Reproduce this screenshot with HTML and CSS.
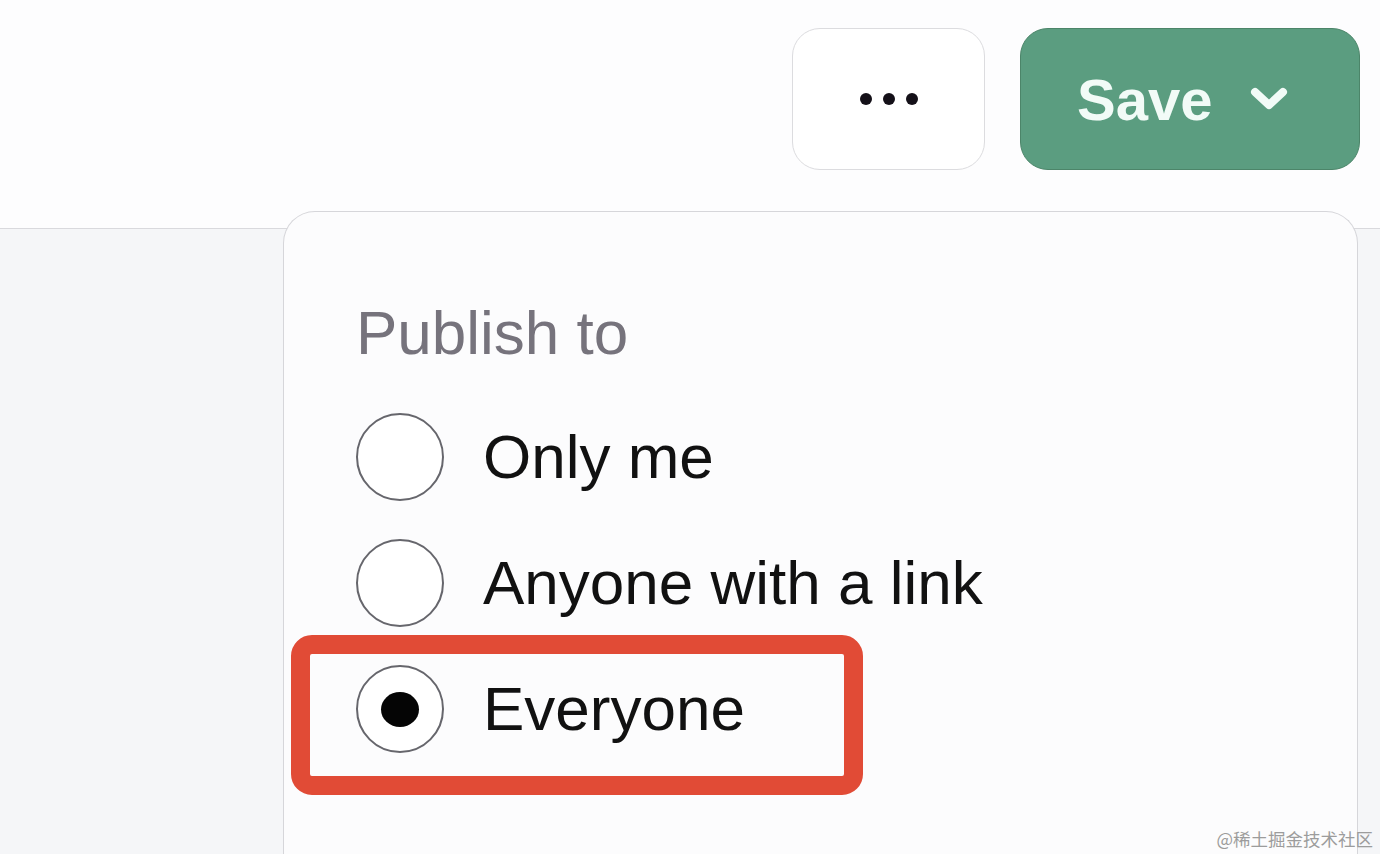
FILE: index.html
```html
<!DOCTYPE html>
<html lang="en">
<head>
<meta charset="utf-8">
<title>Publish</title>
<link rel="stylesheet" href="styles.css">
</head>
<body>
<header class="topbar">
  <button class="btn-more" aria-label="More">
    <span class="dot"></span><span class="dot"></span><span class="dot"></span>
  </button>
  <button class="btn-save">
    <span class="save-label">Save</span>
    <svg class="chev" width="40" height="28" viewBox="0 0 40 28" aria-hidden="true">
      <path d="M6 7 L20 20 L34 7" fill="none" stroke="#f2fbf7" stroke-width="8" stroke-linecap="round" stroke-linejoin="round"/>
    </svg>
  </button>
</header>

<section class="menu">
  <div class="menu-title">Publish to</div>
  <ul class="options">
    <li class="option"><span class="radio"></span><span class="opt-label">Only me</span></li>
    <li class="option"><span class="radio"></span><span class="opt-label">Anyone with a link</span></li>
    <li class="option"><span class="radio checked"></span><span class="opt-label">Everyone</span></li>
  </ul>
  <div class="highlight"></div>
</section>

<div class="watermark">@稀土掘金技术社区</div>
</body>
</html>
```

FILE: styles.css
```css
* { box-sizing: border-box; }

html, body {
  margin: 0;
  padding: 0;
}

body {
  width: 1380px;
  height: 854px;
  overflow: hidden;
  position: relative;
  background: #f5f6f8;
  font-family: "Liberation Sans", Arial, sans-serif;
}

.topbar {
  height: 229px;
  background: #fdfdfe;
  border-bottom: 1px solid #d9d9dd;
  display: flex;
  justify-content: flex-end;
  align-items: flex-start;
  gap: 35px;
  padding: 28px 20px 0 0;
}

.btn-more {
  width: 193px;
  height: 142px;
  background: #ffffff;
  border: 1px solid #dcdcdf;
  border-radius: 28px;
  display: flex;
  align-items: center;
  justify-content: center;
  gap: 11px;
  padding: 0 0 0 1px;
  cursor: pointer;
}

.dot {
  width: 12px;
  height: 12px;
  border-radius: 50%;
  background: #141018;
}

.btn-save {
  width: 340px;
  height: 142px;
  background: #5b9d80;
  border: 1.5px solid #4c8569;
  border-radius: 28px;
  display: flex;
  align-items: center;
  padding: 0 0 0 56px;
  gap: 37px;
  cursor: pointer;
}

.save-label {
  color: #f2fbf7;
  font-family: "Liberation Sans", Arial, sans-serif;
  font-weight: 700;
  font-size: 58px;
  line-height: 58px;
  padding-top: 2px;
}

.chev { display: block; }

.menu {
  position: absolute;
  left: 283px;
  top: 211px;
  width: 1075px;
  height: 643px;
  background: #fcfcfd;
  border: 1px solid #d6d6da;
  border-bottom: none;
  border-radius: 32px 32px 0 0;
  padding: 90px 0 0 0;
}

.menu-title {
  font-size: 62px;
  line-height: 62px;
  color: #76737c;
  padding-left: 72px;
}

.options {
  list-style: none;
  margin: 30px 0 0 0;
  padding: 0 0 0 72px;
}

.option {
  height: 126px;
  display: flex;
  align-items: center;
  gap: 39px;
}

.radio {
  width: 88px;
  height: 88px;
  border-radius: 50%;
  border: 2px solid #66666c;
  background: #ffffff;
  display: flex;
  align-items: center;
  justify-content: center;
  flex: none;
}

.radio.checked::after {
  content: "";
  width: 38px;
  height: 35px;
  border-radius: 50%;
  background: #050505;
}

.opt-label {
  font-size: 62px;
  line-height: 62px;
  color: #111111;
}

.highlight {
  position: absolute;
  left: 7px;
  top: 423px;
  width: 572px;
  height: 160px;
  border: 19px solid #e14b36;
  border-radius: 21px;
}

.watermark {
  position: absolute;
  right: 7px;
  bottom: 5px;
  font-family: "Noto Sans CJK SC", sans-serif;
  font-size: 17.5px;
  line-height: 20px;
  color: #9c9c9c;
}
```
